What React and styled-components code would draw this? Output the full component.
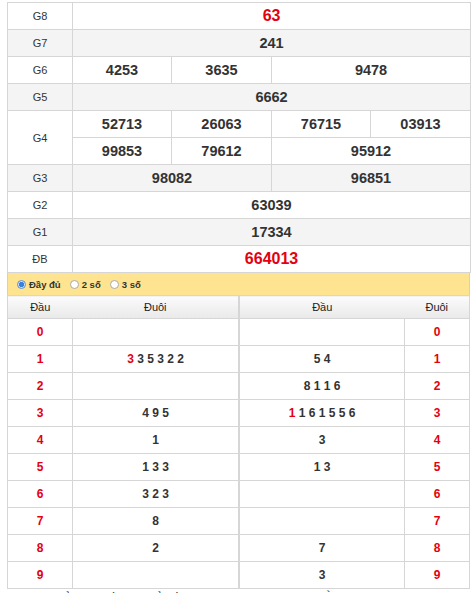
import styled, { createGlobalStyle } from "styled-components";

const GlobalStyle = createGlobalStyle`
  body {
    margin: 0;
    background: #fff;
    font-family: "Liberation Sans", Arial, sans-serif;
    color: #333;
  }
`;

const Page = styled.div`
  width: 463px;
  padding: 2px 0 0 7px;
`;

const ResultTable = styled.table`
  width: 463px;
  table-layout: fixed;
  border-collapse: collapse;
  border: 1px solid #d6d6d6;
`;

const Row = styled.tr`
  height: 27px;
  background: ${({ $alt }) => ($alt ? "#f4f4f4" : "#fff")};
`;

const Label = styled.td`
  border: 1px solid #d6d6d6;
  padding: 0;
  text-align: center;
  font-size: 11px;
  color: #333;
`;

const Num = styled.td`
  border: 1px solid #d6d6d6;
  padding: 0;
  text-align: center;
  font-size: ${({ $red }) => ($red ? "16px" : "14.5px")};
  font-weight: bold;
  color: ${({ $red }) => ($red ? "#e4000f" : "#333")};
`;

const Filter = styled.div`
  height: 22px;
  background: #fee390;
  display: flex;
  align-items: center;
  padding-left: 9px;
  gap: 9px;
  border-left: 1px solid #e8d18a;
  border-right: 1px solid #e8d18a;
`;

const Option = styled.label`
  display: flex;
  align-items: center;
  gap: 3px;
  font-size: 9.5px;
  font-weight: bold;
  color: #333;
`;

const Radio = styled.span`
  width: 7px;
  height: 7px;
  border-radius: 50%;
  border: 1px solid ${({ $on }) => ($on ? "#5b8fd6" : "#a9a9a9")};
  background: ${({ $on }) =>
    $on ? "radial-gradient(circle, #3d7ed8 45%, #cfe0f7 60%)" : "#fff"};
`;

const Loto = styled.div`
  display: flex;
`;

const LotoTable = styled.table`
  width: ${({ $w }) => $w}px;
  table-layout: fixed;
  border-collapse: collapse;
  border: 1px solid #d6d6d6;
`;

const Head = styled.th`
  height: 22px;
  padding: 0;
  font-size: 11px;
  font-weight: normal;
  color: #222;
  background: linear-gradient(#fbfbfb, #e9e9e9);
`;

const LotoRow = styled.tr`
  height: 27px;
`;

const Cell = styled.td`
  border: 1px solid #d6d6d6;
  padding: 0;
  text-align: center;
  font-size: 12px;
  font-weight: bold;
  color: ${({ $red }) => ($red ? "#e4000f" : "#333")};
  white-space: pre;
`;

const Red = styled.span`
  color: #e4000f;
`;

const Note = styled.p`
  margin: 1px 0 0;
  font-size: 13px;
  color: #333;
  white-space: nowrap;
`;

const head = [
  "",
  [["3", true], "3 5 3 2 2"],
  "",
  "4 9 5",
  "1",
  "1 3 3",
  "3 2 3",
  "8",
  "2",
  "",
];

const tail = [
  "",
  "5 4",
  "8 1 1 6",
  [["1", true], "1 6 1 5 5 6"],
  "3",
  "1 3",
  "",
  "",
  "7",
  "3",
];

const renderNums = (v) =>
  Array.isArray(v) ? (
    <>
      <Red>{v[0][0]}</Red> {v[1]}
    </>
  ) : (
    v
  );

export default function App() {
  return (
    <>
      <GlobalStyle />
      <Page>
        <ResultTable>
          <colgroup>
            <col style={{ width: 65 }} />
            <col style={{ width: 99 }} />
            <col style={{ width: 100 }} />
            <col style={{ width: 99 }} />
            <col style={{ width: 100 }} />
          </colgroup>
          <tbody>
            <Row>
              <Label>G8</Label>
              <Num colSpan={4} $red>63</Num>
            </Row>
            <Row $alt>
              <Label>G7</Label>
              <Num colSpan={4}>241</Num>
            </Row>
            <Row>
              <Label>G6</Label>
              <Num>4253</Num>
              <Num>3635</Num>
              <Num colSpan={2}>9478</Num>
            </Row>
            <Row $alt>
              <Label>G5</Label>
              <Num colSpan={4}>6662</Num>
            </Row>
            <Row>
              <Label rowSpan={2}>G4</Label>
              <Num>52713</Num>
              <Num>26063</Num>
              <Num>76715</Num>
              <Num>03913</Num>
            </Row>
            <Row>
              <Num>99853</Num>
              <Num>79612</Num>
              <Num colSpan={2}>95912</Num>
            </Row>
            <Row $alt>
              <Label>G3</Label>
              <Num colSpan={2}>98082</Num>
              <Num colSpan={2}>96851</Num>
            </Row>
            <Row>
              <Label>G2</Label>
              <Num colSpan={4}>63039</Num>
            </Row>
            <Row $alt>
              <Label>G1</Label>
              <Num colSpan={4}>17334</Num>
            </Row>
            <Row>
              <Label>ĐB</Label>
              <Num colSpan={4} $red>664013</Num>
            </Row>
          </tbody>
        </ResultTable>

        <Filter>
          <Option>
            <Radio $on />
            Đầy đủ
          </Option>
          <Option>
            <Radio />2 số
          </Option>
          <Option>
            <Radio />3 số
          </Option>
        </Filter>

        <Loto>
          <LotoTable $w={232}>
            <colgroup>
              <col style={{ width: 65 }} />
              <col />
            </colgroup>
            <thead>
              <tr>
                <Head>Đầu</Head>
                <Head>Đuôi</Head>
              </tr>
            </thead>
            <tbody>
              {head.map((v, i) => (
                <LotoRow key={i}>
                  <Cell $red>{i}</Cell>
                  <Cell>{renderNums(v)}</Cell>
                </LotoRow>
              ))}
            </tbody>
          </LotoTable>
          <LotoTable $w={231}>
            <colgroup>
              <col />
              <col style={{ width: 65 }} />
            </colgroup>
            <thead>
              <tr>
                <Head>Đầu</Head>
                <Head>Đuôi</Head>
              </tr>
            </thead>
            <tbody>
              {tail.map((v, i) => (
                <LotoRow key={i}>
                  <Cell>{renderNums(v)}</Cell>
                  <Cell $red>{i}</Cell>
                </LotoRow>
              ))}
            </tbody>
          </LotoTable>
        </Loto>

        <Note>
          Bạn có thể xem kết quả xổ số Bình Định các kỳ trước bằng cách chọn ngày
        </Note>
      </Page>
    </>
  );
}
